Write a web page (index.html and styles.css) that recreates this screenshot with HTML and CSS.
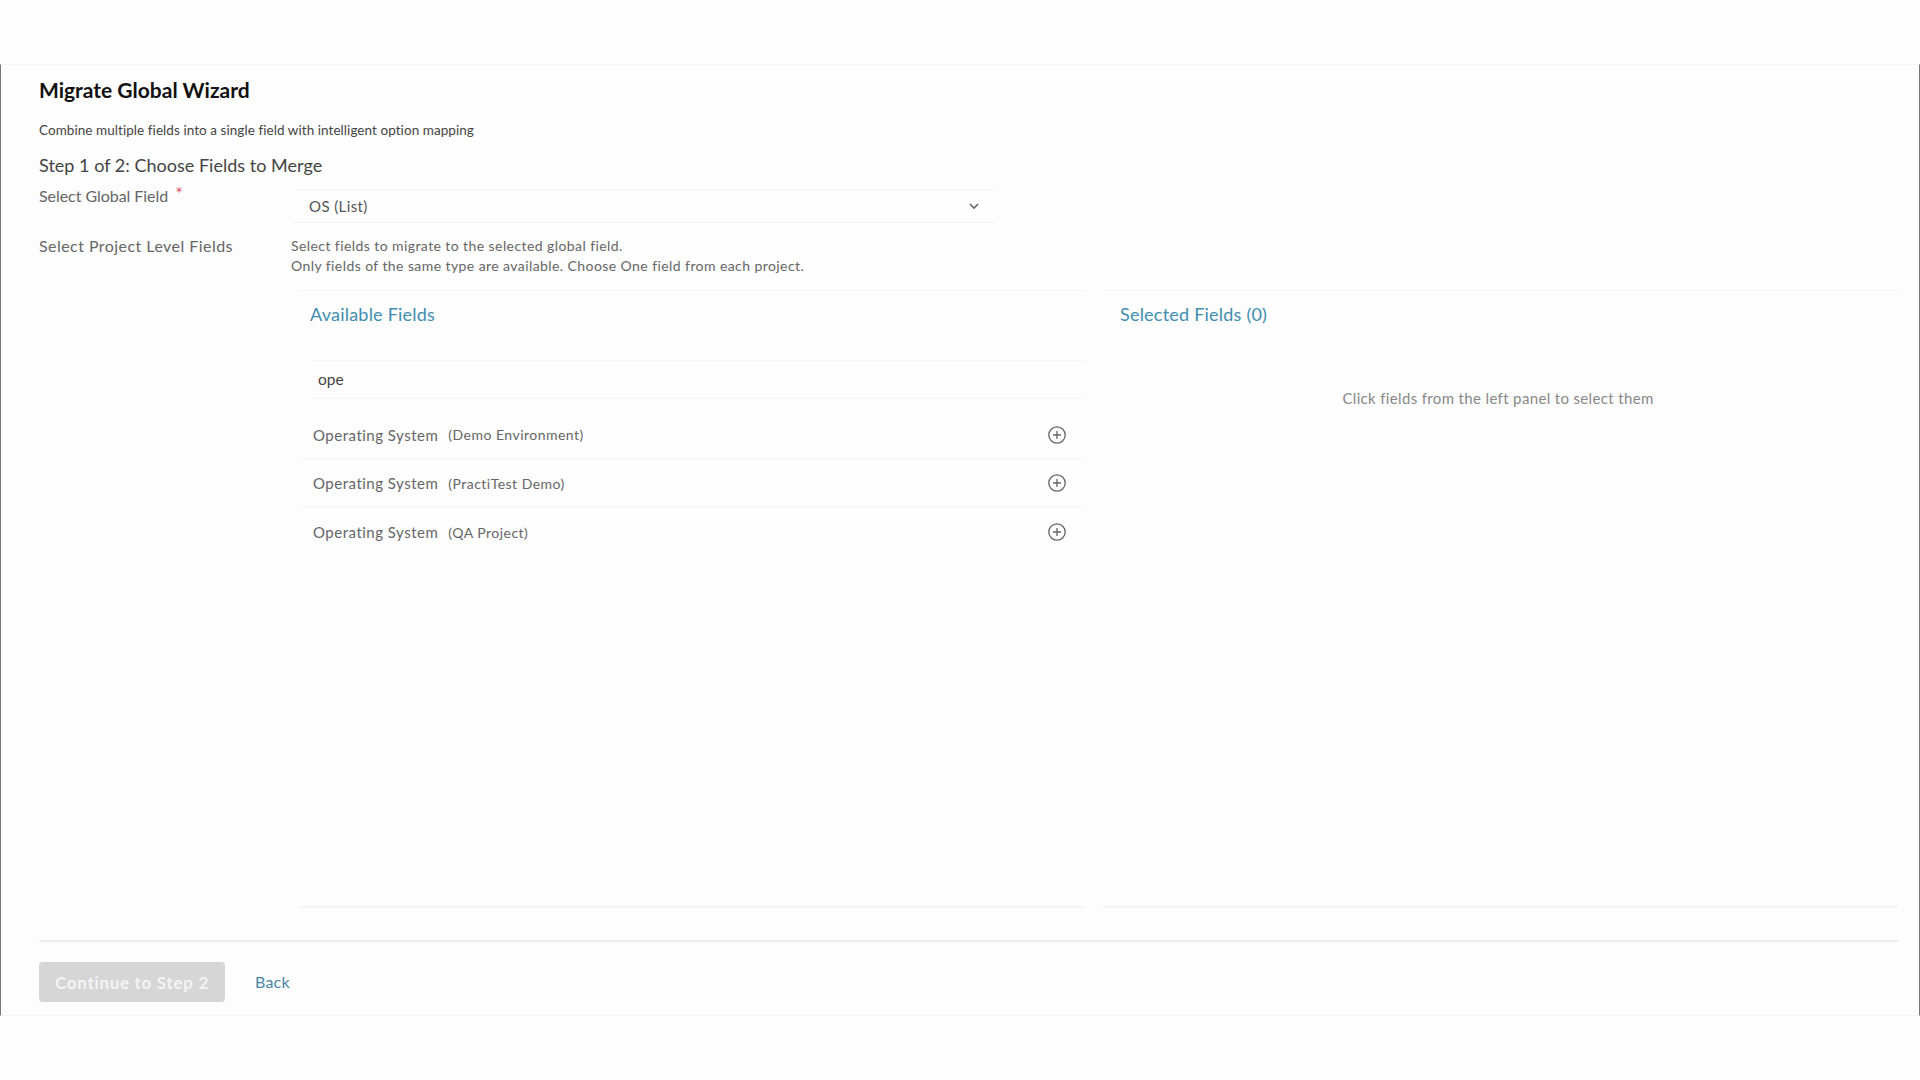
FILE: index.html
```html
<!DOCTYPE html>
<html lang="en">
<head>
<meta charset="utf-8">
<title>Migrate Global Wizard</title>
<link rel="stylesheet" href="styles.css">
</head>
<body>
<div class="topbar"></div>
<main class="wizard">
  <h1 class="title">Migrate Global Wizard</h1>
  <p class="subtitle">Combine multiple fields into a single field with intelligent option mapping</p>
  <h2 class="step">Step 1 of 2: Choose Fields to Merge</h2>
  <div class="row-global">
    <label class="label label-global">Select Global Field<span class="req">*</span></label>
    <div class="select">
      <span>OS (List)</span>
      <svg class="chevron" width="12" height="8" viewBox="0 0 12 8"><path d="M2 2l4 4 4-4" fill="none" stroke="#666" stroke-width="1.6"/></svg>
    </div>
  </div>
  <div class="row-project">
    <label class="label label-project">Select Project Level Fields</label>
    <div class="project-body">
      <p class="help">Select fields to migrate to the selected global field.<br>Only fields of the same type are available. Choose One field from each project.</p>
      <div class="panels">
        <section class="panel panel-left">
          <h3 class="panel-title">Available Fields</h3>
          <div class="search">ope</div>
          <ul class="list">
            <li class="item"><span class="item-name">Operating System</span><span class="item-project">(Demo Environment)</span>
              <svg class="plus" width="20" height="20" viewBox="0 0 20 20"><circle cx="10" cy="10" r="8.2" fill="none" stroke="#666" stroke-width="1.3"/><path d="M10 6v8M6 10h8" stroke="#666" stroke-width="1.3"/></svg></li>
            <li class="item"><span class="item-name">Operating System</span><span class="item-project">(PractiTest Demo)</span>
              <svg class="plus" width="20" height="20" viewBox="0 0 20 20"><circle cx="10" cy="10" r="8.2" fill="none" stroke="#666" stroke-width="1.3"/><path d="M10 6v8M6 10h8" stroke="#666" stroke-width="1.3"/></svg></li>
            <li class="item"><span class="item-name">Operating System</span><span class="item-project">(QA Project)</span>
              <svg class="plus" width="20" height="20" viewBox="0 0 20 20"><circle cx="10" cy="10" r="8.2" fill="none" stroke="#666" stroke-width="1.3"/><path d="M10 6v8M6 10h8" stroke="#666" stroke-width="1.3"/></svg></li>
          </ul>
        </section>
        <section class="panel panel-right">
          <h3 class="panel-title">Selected Fields (0)</h3>
          <p class="empty">Click fields from the left panel to select them</p>
        </section>
      </div>
    </div>
  </div>
  <footer class="actions">
    <button class="primary" disabled>Continue to Step 2</button>
    <a class="back" href="#">Back</a>
  </footer>
</main>
</body>
</html>
```
FILE: styles.css
```css
* { box-sizing: border-box; }
html, body { margin: 0; height: 100%; }
body {
  background: #fefefe;
  color: #555;
  font-family: "Lato", "Open Sans", sans-serif;
  display: flex;
  flex-direction: column;
  height: 1080px;
  overflow: hidden;
}
.topbar { height: 64px; flex: none; }
.wizard {
  height: 952px;
  flex: none;
  background: #fdfdfd;
  border-left: 1px solid #777;
  border-right: 1px solid #777;
  border-top: 1px solid #f6f6f6;
  border-bottom: 1px solid #f4f4f4;
  padding: 0 21px 0 38px;
  display: flex;
  flex-direction: column;
}
.title { margin: 11px 0 0; height: 28px; line-height: 28px; font-size: 21px; font-weight: 700; color: #111; }
.subtitle { margin: 17px 0 0; height: 18px; line-height: 18px; font-size: 13.5px; color: #444; letter-spacing: 0.06px; }
.step { margin: 14px 0 0; height: 24px; line-height: 24px; font-size: 18px; font-weight: 400; color: #444; letter-spacing: 0.02px; }
.label { font-size: 16px; color: #666; line-height: 20px; }
.label-global { letter-spacing: -0.05px; }
.label-project { letter-spacing: 0.45px; }
.req { color: #d9506a; font-size: 18px; margin-left: 7px; vertical-align: 2px; line-height: 1; }
.row-global { display: grid; grid-template-columns: 256px 699px; margin-top: 7px; height: 42px; }
.select {
  margin-top: 5px;
  height: 34px;
  border-top: 1px solid #f3f3f3;
  border-bottom: 1px solid #f0f0f0;
  padding: 0 14px;
  display: flex;
  align-items: center;
  justify-content: space-between;
  font-size: 15px;
  color: #555;
  letter-spacing: 0.4px;
}
.row-project { display: grid; grid-template-columns: 252px 1fr; margin-top: 10px; flex: 1; min-height: 0; }
.project-body { display: flex; flex-direction: column; }
.help { margin: 0; font-size: 14px; line-height: 20px; color: #666; letter-spacing: 0.42px; height: 54px; }
.panels { display: grid; grid-template-columns: 802px 1fr; flex: none; height: 618px; }
.panel { border-top: 1px solid #f4f4f4; border-bottom: 2px solid #f4f4f4; }
.panel-left { margin-left: 8px; margin-right: 8px; padding-left: 11px; }
.panel-right { margin-left: 10px; padding-left: 17px; }
.panel-title { margin: 11px 0 0; height: 24px; line-height: 24px; font-size: 18px; font-weight: 400; color: #3f8db0; letter-spacing: 0.22px; }
.search {
  margin: 34px 0 0 2px;
  height: 39px;
  line-height: 37px;
  border-top: 1px solid #f4f4f4;
  border-bottom: 1px solid #f4f4f4;
  padding-left: 6px;
  font-size: 15.5px;
  color: #444;
}
.list { list-style: none; margin: 12px 0 0 -11px; padding: 0; }
.item {
  height: 48.5px;
  display: flex;
  align-items: center;
  padding: 0 18px 0 14px;
  border-bottom: 1px solid #f4f4f4;
  font-size: 15px;
  color: #666;
  letter-spacing: 0.5px;
}
.item:last-child { border-bottom: 0; }
.item-project { margin-left: 10px; font-size: 14px; letter-spacing: 0.48px; }
.plus { margin-left: auto; }
.empty { margin: 62px 5px 0 -17px; text-align: center; font-size: 15px; color: #888; letter-spacing: 0.35px; line-height: 20px; }
.actions {
  flex: none;
  border-top: 2px solid #ececec;
  height: 75px;
  padding-top: 20px;
  display: flex;
  align-items: flex-start;
}
.primary {
  width: 186px;
  height: 40px;
  border: 0;
  border-radius: 4px;
  background: #d6d6d6;
  color: #f4f4f4;
  font: 700 17px "Lato", sans-serif;
  letter-spacing: 0.7px;
}
.back { margin-left: 30px; line-height: 40px; font-size: 16px; color: #4a86a8; text-decoration: none; letter-spacing: 0.2px; }
```
